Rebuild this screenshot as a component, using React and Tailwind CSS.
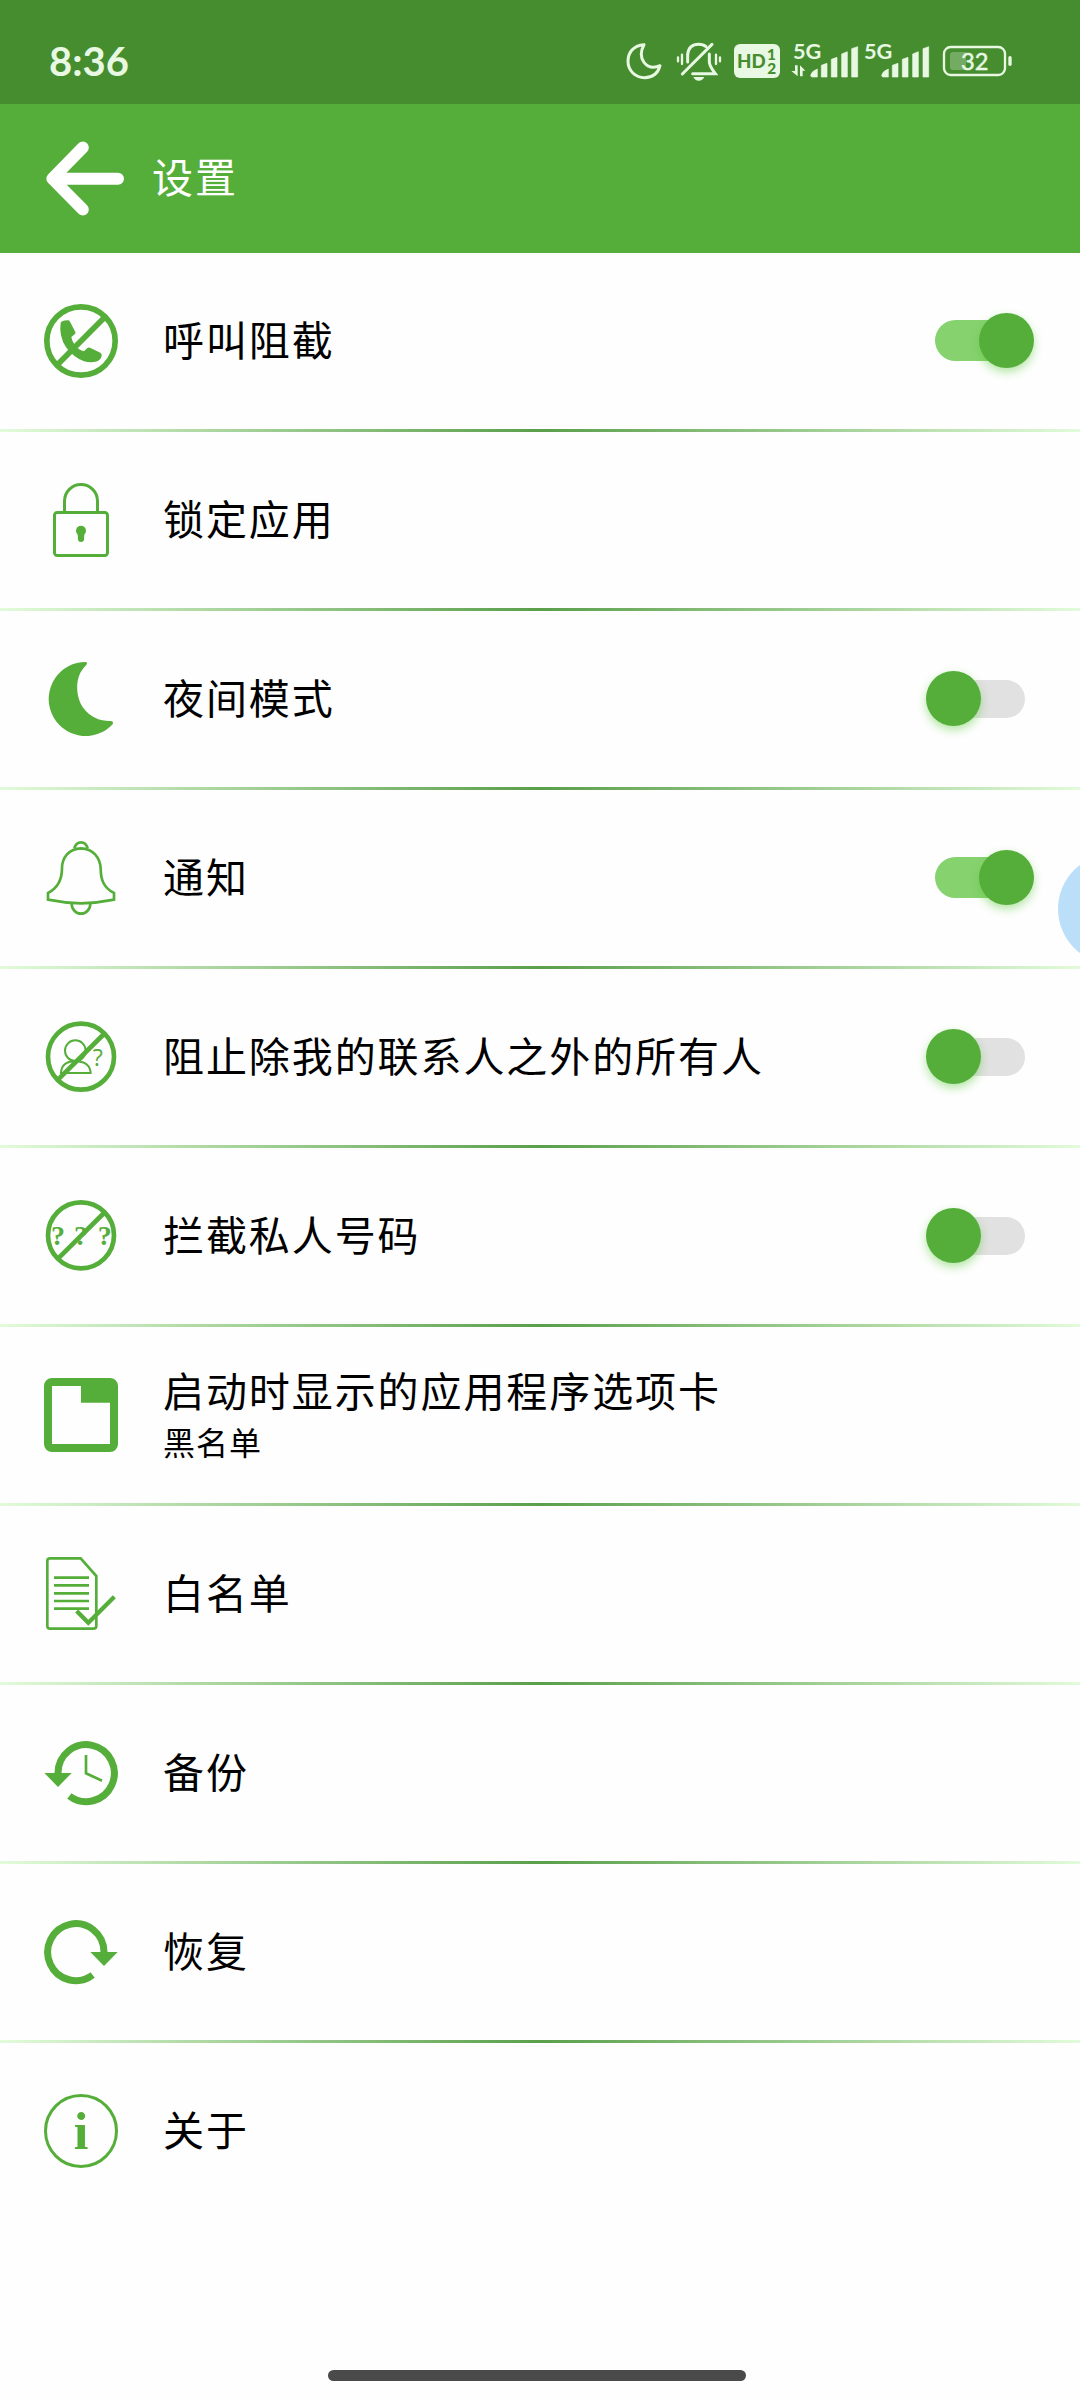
import React, { useState } from "react";

const GREEN = "#55ae3a";

const BlockCallIcon = () => (
  <svg viewBox="0 0 222 222" className="size-[74px]">
    <circle cx="111" cy="111" r="102.5" fill="none" stroke={GREEN} strokeWidth="17" />
    <path
      d="M50 56Q53 50 70 49Q76 48 78 53L94 84Q96 88 92 91L82 99Q84 112 93 124Q105 139 120 142L130 132Q134 129 138 131L169 146Q174 149 173 155Q172 164 160 172Q140 178 120 172Q88 160 66 130Q44 95 50 56Z"
      fill={GREEN}
    />
    <path d="M40 182L182 40" stroke={GREEN} strokeWidth="17" />
  </svg>
);

const LockIcon = () => (
  <svg viewBox="0 0 222 222" className="size-[74px]">
    <g fill="none" stroke={GREEN} strokeWidth="9">
      <rect x="31.5" y="88.5" width="159" height="129" rx="8" />
      <path d="M61.5 86V54a49.5 49.5 0 0 1 99 0V86" />
    </g>
    <circle cx="111" cy="143" r="15" fill={GREEN} />
    <path d="M101 150L102 171Q103 177 111 177Q119 177 120 171L121 150Z" fill={GREEN} />
  </svg>
);

const MoonIcon = () => (
  <svg viewBox="0 0 222 222" className="size-[74px]">
    <path
      d="M126 0A111 111 0 1 0 206 187Q210 178 200 177C172 178 140 168 118 138C92 100 92 40 127 9Q131 1 126 0Z"
      fill={GREEN}
    />
  </svg>
);

const BellIcon = () => (
  <svg viewBox="0 0 222 222" className="size-[74px]" fill="none" stroke={GREEN} strokeWidth="8">
    <path d="M91 22Q96 4 111 4Q126 4 131 22" />
    <path d="M111 22C75 23 54 50 54 82C54 115 44 140 12 156V176Q60 186 111 187Q162 186 210 176V156C178 140 170 115 170 82C168 50 147 23 111 22Z" />
    <path d="M83 188A28 30 0 0 0 139 188" />
  </svg>
);

const BlockUnknownIcon = () => (
  <svg viewBox="0 0 222 222" className="size-[74px]">
    <g fill="none" stroke={GREEN}>
      <circle cx="111" cy="110" r="99" strokeWidth="14" />
      <circle cx="94" cy="92" r="31" strokeWidth="6" />
      <path d="M51 159C52 132 72 124 94 124C118 124 138 132 140 159Z" strokeWidth="6" />
      <path d="M45 176L180 42" strokeWidth="14" />
    </g>
    <text x="161" y="137" textAnchor="middle" fontSize="70" fontFamily="Open Sans, sans-serif" fill={GREEN}>
      ?
    </text>
  </svg>
);

const BlockPrivateIcon = () => (
  <svg viewBox="0 0 222 222" className="size-[74px]">
    <circle cx="111" cy="109" r="99" fill="none" stroke={GREEN} strokeWidth="14" />
    <g fill={GREEN} fontSize="84" fontWeight="700" fontFamily="Liberation Serif, serif" textAnchor="middle">
      <text x="42" y="138">?</text>
      <text x="111" y="138">?</text>
      <text x="182" y="138">?</text>
    </g>
    <path d="M45 176L180 42" stroke={GREEN} strokeWidth="14" />
  </svg>
);

const TabIcon = () => (
  <svg viewBox="0 0 222 222" className="size-[74px]">
    <path
      fillRule="evenodd"
      d="M24 0H198A24 24 0 0 1 222 24V198A24 24 0 0 1 198 222H24A24 24 0 0 1 0 198V24A24 24 0 0 1 24 0ZM24 24V198H198V74H111V24Z"
      fill={GREEN}
    />
  </svg>
);

const WhitelistIcon = () => (
  <svg viewBox="0 0 222 222" className="size-[74px]" fill="none" stroke={GREEN}>
    <path d="M18 4H110L157 57V206Q157 215 148 215H18Q10 215 10 207V12Q10 4 18 4Z" strokeWidth="8" />
    <path d="M30 62H135M30 85H135M30 109H135M30 132H135M30 155H135" strokeWidth="8" />
    <path d="M98 162L133 197L211 119" strokeWidth="13" />
  </svg>
);

const BackupIcon = () => (
  <svg viewBox="0 0 222 222" className="size-[74px]">
    <path d="M42 116V111A84.5 85.5 0 1 1 76 180" fill="none" stroke={GREEN} strokeWidth="21" />
    <path d="M1 111H83L42 153Z" fill={GREEN} />
    <path d="M126 57V112L174 134" fill="none" stroke={GREEN} strokeWidth="8" />
  </svg>
);

const RestoreIcon = () => (
  <svg viewBox="0 0 222 222" className="size-[74px]">
    <path d="M180 116V111A84.5 85.5 0 1 0 146 180" fill="none" stroke={GREEN} strokeWidth="21" />
    <path d="M221 111H139L180 153Z" fill={GREEN} />
  </svg>
);

const AboutIcon = () => (
  <svg viewBox="0 0 222 222" className="size-[74px]">
    <circle cx="111" cy="111" r="106.5" fill="none" stroke={GREEN} strokeWidth="9" />
    <text
      x="111"
      y="165"
      textAnchor="middle"
      fontSize="158"
      fontWeight="700"
      fontFamily="Liberation Serif, serif"
      fill={GREEN}
    >
      i
    </text>
  </svg>
);

const StatusBar = () => (
  <div className="flex h-[104px] items-start justify-between bg-[#468d2f] pl-[49px] pr-16 pt-9 text-[#e8f8e2]">
    <span className="font-['Lato',sans-serif] text-[40px] font-bold leading-[50px]">8:36</span>
    <div className="flex h-12">
      {/* do not disturb */}
      <svg viewBox="60 48 150 144" className="h-12 w-[50px]">
        <path
          d="M132 74C98 76 84 100 84 124C84 152 106 173 134 173C158 173 174 160 180 137C160 146 144 142 132 127C120 110 122 92 132 74Z"
          fill="none"
          stroke="currentColor"
          strokeWidth="9"
          strokeLinejoin="round"
        />
      </svg>
      {/* muted */}
      <svg viewBox="210 48 174 144" className="h-12 w-[58px]" fill="none" stroke="currentColor" strokeWidth="9" strokeLinecap="round">
        <path d="M263 126V104Q266 73 296 73Q310 73 318 80" />
        <path d="M247 162L336 73" strokeWidth="9" />
        <path d="M328 102V126Q328 138 346 161H278" />
        <path d="M234 112V124M246 104V132M348 104V132M360 112V124" strokeWidth="7" />
        <path d="M280 171H313Q308 182 296 182Q285 182 280 171Z" fill="currentColor" stroke="none" />
      </svg>
      <svg viewBox="384 48 174 144" className="h-12 w-[58px]">
        <rect x="402" y="72" width="138" height="102" rx="18" fill="currentColor" />
        <g fill="#468d2f" fontFamily="Lato, sans-serif" fontWeight="900">
          <text x="411" y="143" fontSize="59" textLength="86" lengthAdjust="spacingAndGlyphs">HD</text>
          <text x="501" y="120" fontSize="46">1</text>
          <text x="502" y="162" fontSize="46">2</text>
        </g>
      </svg>
      <svg viewBox="558 48 228 144" className="h-12 w-[76px]" fill="currentColor">
        <text x="579" y="117" fontSize="64" fontWeight="700" fontFamily="Lato, sans-serif" textLength="85" lengthAdjust="spacingAndGlyphs">5G</text>
        <path d="M585 136H593V169L574 153H585ZM600 169V136L616 152H608V169Z" />
        <path d="M632 166Q634 154 652 147V171H637Q632 171 632 166ZM664 171V136L681 130V171ZM694 171V118L711 112V171ZM725 171V102L742 95V171ZM755 171V86L773 80V171Z" stroke="currentColor" strokeWidth="2" strokeLinejoin="round" />
      </svg>
      <svg viewBox="786 48 222 144" className="h-12 w-[74px]" fill="currentColor">
        <text x="792" y="117" fontSize="64" fontWeight="700" fontFamily="Lato, sans-serif" textLength="85" lengthAdjust="spacingAndGlyphs">5G</text>
        <path d="M845 166Q847 154 865 147V171H850Q845 171 845 166ZM877 171V136L894 130V171ZM907 171V118L924 112V171ZM938 171V102L955 95V171ZM969 171V86L986 80V171Z" stroke="currentColor" strokeWidth="2" strokeLinejoin="round" />
      </svg>
      {/* battery */}
      <svg viewBox="1008 48 240 144" className="h-12 w-20">
        <rect x="1032" y="81" width="183" height="84" rx="20" fill="none" stroke="currentColor" strokeWidth="7" />
        <path d="M1060 96H1098V150H1060Q1050 150 1050 140V106Q1050 96 1060 96Z" fill="#74ab63" />
        <rect x="1225" y="108" width="10" height="30" rx="5" fill="currentColor" />
        <text
          x="1124"
          y="150"
          textAnchor="middle"
          fontSize="71"
          fontFamily="Lato, sans-serif"
          fill="currentColor"
          stroke="currentColor"
          strokeWidth="1.5"
        >
          32
        </text>
      </svg>
    </div>
  </div>
);

const Header = () => (
  <header className="flex h-[149px] items-center gap-7 bg-[#55ae3a] pl-[46px] text-white">
    <svg viewBox="137 421 235 225" className="mb-px h-[75px] w-[78px]">
      <path
        d="M248 440L156 534L248 627M160 534H354"
        fill="none"
        stroke="currentColor"
        strokeWidth="36"
        strokeLinecap="round"
        strokeLinejoin="round"
      />
    </svg>
    <h1 className="pb-1.5 text-[41px] leading-none tracking-[1.9px]">设置</h1>
  </header>
);

const Toggle = ({ on, onChange }) => (
  <button onClick={onChange} className="relative mb-px flex h-[55px] w-[108px] items-center pl-[9px]">
    <span
      className={
        on
          ? "h-[41px] w-[90px] rounded-full bg-[#86d26f]"
          : "h-[38px] w-[90px] rounded-full bg-[#e1e1e1]"
      }
    />
    <span
      className={`absolute top-0 size-[55px] rounded-full bg-[#55ae3a] shadow-[0_4px_10px_rgba(85,200,50,0.45)] ${
        on ? "right-0" : "left-0"
      }`}
    />
  </button>
);

const rows = [
  { id: "call", label: "呼叫阻截", Icon: BlockCallIcon, toggle: true },
  { id: "lock", label: "锁定应用", Icon: LockIcon },
  { id: "night", label: "夜间模式", Icon: MoonIcon, toggle: true },
  { id: "notify", label: "通知", Icon: BellIcon, toggle: true },
  { id: "contacts", label: "阻止除我的联系人之外的所有人", Icon: BlockUnknownIcon, toggle: true },
  { id: "private", label: "拦截私人号码", Icon: BlockPrivateIcon, toggle: true },
  { id: "tab", label: "启动时显示的应用程序选项卡", sub: "黑名单", Icon: TabIcon },
  { id: "whitelist", label: "白名单", Icon: WhitelistIcon },
  { id: "backup", label: "备份", Icon: BackupIcon },
  { id: "restore", label: "恢复", Icon: RestoreIcon },
  { id: "about", label: "关于", Icon: AboutIcon },
];

const App = () => {
  const [enabled, setEnabled] = useState({ call: true, notify: true });

  return (
    <div className="relative flex h-[2400px] w-[1080px] flex-col overflow-hidden bg-[#fefefe] font-['Noto_Sans_CJK_SC',sans-serif] text-black">
      <StatusBar />
      <Header />
      <main className="flex-1">
        {rows.map(({ id, label, sub, Icon, toggle }, i) => (
          <div key={id}>
            <div className="flex h-44 items-center pl-11 pr-[46px]">
              <Icon />
              <div className={sub ? "ml-[45px] flex-1 pb-0.5" : "ml-[45px] flex-1 pb-1.5"}>
                <p className="text-[41px] leading-[50px] tracking-[1.92px]">{label}</p>
                {sub && <p className="mt-1 text-[32px] leading-[46px] tracking-[1px]">{sub}</p>}
              </div>
              {toggle && (
                <Toggle
                  on={!!enabled[id]}
                  onChange={() => setEnabled({ ...enabled, [id]: !enabled[id] })}
                />
              )}
            </div>
            {i < rows.length - 1 && (
              <div className="h-[3px] bg-linear-to-r from-[#e2fbda] via-[#5a9f4a] to-[#e2fbda]" />
            )}
          </div>
        ))}
      </main>
      {/* floating assistive button, mostly off screen */}
      <div className="absolute -right-[88px] top-[854px] size-[110px] rounded-full bg-[#bbdff9]" />
      <div className="mb-[19px] ml-[328px] h-[11px] w-[418px] rounded-full bg-[#4a4a4a]" />
    </div>
  );
};

export default App;
